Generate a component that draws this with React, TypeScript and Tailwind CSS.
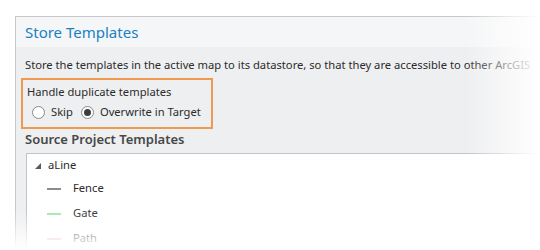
import React from "react";

const font = { fontFamily: '"Noto Sans", "Open Sans", sans-serif' };

function Radio({ label, checked }: { label: string; checked?: boolean }) {
  return (
    <label className="flex items-center gap-[6px] whitespace-nowrap">
      <span className="flex h-[13px] w-[13px] shrink-0 items-center justify-center rounded-full border border-[#8a8a8a] bg-white">
        {checked ? <span className="h-[7px] w-[7px] rounded-full bg-[#3c3c3c]" /> : null}
      </span>
      <span>{label}</span>
    </label>
  );
}

function TemplateRow({ name, color }: { name: string; color: string }) {
  return (
    <div className="flex h-[25px] items-center pl-[20px]">
      <span className={`mr-[12px] h-[2px] w-[14px] ${color}`} />
      <span>{name}</span>
    </div>
  );
}

export default function App() {
  return (
    <div
      className="relative h-[250px] w-[540px] overflow-hidden bg-white pl-[15px] pt-[16px] text-[11.2px] text-[#2b2b2b]"
      style={font}
    >
      <div className="h-[260px] border-l border-t border-[#c8c8c8] bg-[#eeeff1]">
        <div className="flex h-[30px] items-center bg-[#f5f6f7] pl-[9px] text-[15px] text-[#1a7fc4]">
          Store Templates
        </div>

        <div className="pl-[5px] pt-[9px]">
          <p className="whitespace-nowrap pl-[4px] leading-[17px]">
            Store the templates in the active map to its datastore, so that they are accessible to other ArcGIS
          </p>

          <div className="mt-[5px] w-[192px] border-2 border-[#ef9a50] px-[4px] pb-[6px] pt-[3px]">
            <div className="leading-[18px]">Handle duplicate templates</div>
            <div className="mt-[2px] flex items-center gap-[8px] pl-[5px] leading-[18px]">
              <Radio label="Skip" />
              <Radio label="Overwrite in Target" checked />
            </div>
          </div>

          <div className="pl-[4px] text-[13px] font-semibold leading-[20px] text-[#474747]">
            Source Project Templates
          </div>

          <div className="ml-[5px] mt-[4px] border-l border-t border-[#c4c4c4] bg-white pt-[1px]">
            <div className="flex h-[21px] items-center pl-[7px]">
              <svg width="8" height="8" viewBox="0 0 8 8" className="mr-[6px]">
                <path d="M7 1 L7 7 L1 7 Z" fill="#5a5a5a" />
              </svg>
              <span>aLine</span>
            </div>
            <TemplateRow name="Fence" color="bg-[#8c8c8c]" />
            <TemplateRow name="Gate" color="bg-[#9fe8a8]" />
            <TemplateRow name="Path" color="bg-[#f3b7b3]" />
          </div>
        </div>
      </div>

      <div className="pointer-events-none absolute inset-y-0 right-0 w-[75px] bg-gradient-to-r from-transparent to-white" />
      <div className="pointer-events-none absolute inset-x-0 bottom-0 h-[40px] bg-gradient-to-b from-transparent to-white" />
    </div>
  );
}
